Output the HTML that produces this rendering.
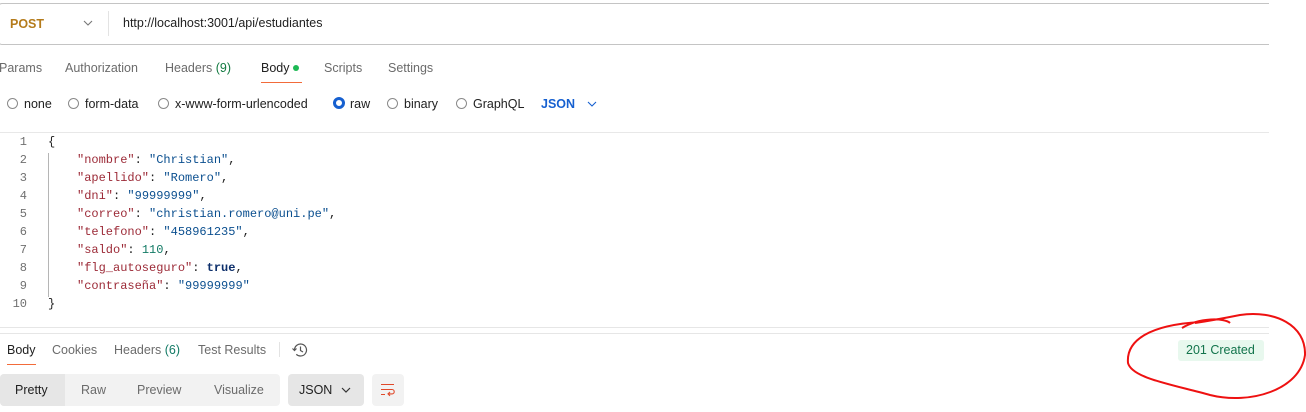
<!DOCTYPE html>
<html><head><meta charset="utf-8"><style>
*{margin:0;padding:0;box-sizing:border-box}
body{width:1306px;height:412px;background:#fff;position:relative;overflow:hidden;font-family:"Liberation Sans",sans-serif;font-size:12.5px;color:#212121}
.a{position:absolute;white-space:nowrap}
.g{color:#6b6b6b}
.rad{position:absolute;width:11px;height:11px;border:1px solid #8a8a8a;border-radius:50%}
.code{font-family:"Liberation Mono",monospace;font-size:12px}
.ln{position:absolute;width:27px;text-align:right;color:#707070;font-family:"Liberation Mono",monospace;font-size:12px}
.k{color:#9c2a37}.s{color:#0b4f8f}.n{color:#127a65}.b{color:#0d2f6b}
</style></head><body>
<div class="a" style="left:-2px;top:3px;width:1271px;height:42px;border:1px solid #c4c4c4;border-right:none;border-radius:4px 0 0 4px"></div>
<div class="a" style="left:10px;top:17px;color:#b47b1b;font-weight:bold;font-size:12.5px">POST</div>
<svg class="a" style="left:83px;top:19px" width="10" height="8"><path d="M1 2l4 4 4-4" fill="none" stroke="#777" stroke-width="1.1"/></svg>
<div class="a" style="left:108px;top:11px;width:1px;height:25px;background:#e3e3e3"></div>
<div class="a" style="left:123px;top:16px;color:#212121;font-size:12.5px">http://localhost:3001/api/estudiantes</div>

<div class="a g" style="left:-1px;top:61px">Params</div>
<div class="a g" style="left:65px;top:61px">Authorization</div>
<div class="a g" style="left:165px;top:61px">Headers <span style="color:#127a40">(9)</span></div>
<div class="a" style="left:261px;top:61px;color:#212121">Body</div>
<div class="a" style="left:293px;top:65px;width:6px;height:6px;border-radius:50%;background:#1db954"></div>
<div class="a" style="left:261px;top:82px;width:41px;height:1px;background:#f26b3a"></div>
<div class="a g" style="left:324px;top:61px">Scripts</div>
<div class="a g" style="left:388px;top:61px">Settings</div>

<div class="rad" style="left:7px;top:98px"></div><div class="a" style="left:24px;top:97px">none</div>
<div class="rad" style="left:68px;top:98px"></div><div class="a" style="left:85px;top:97px">form-data</div>
<div class="rad" style="left:158px;top:98px"></div><div class="a" style="left:175px;top:97px">x-www-form-urlencoded</div>
<div class="a" style="left:333px;top:97px;width:12px;height:12px;border:3.5px solid #1660d0;border-radius:50%"></div><div class="a" style="left:350px;top:97px">raw</div>
<div class="rad" style="left:387px;top:98px"></div><div class="a" style="left:404px;top:97px">binary</div>
<div class="rad" style="left:456px;top:98px"></div><div class="a" style="left:473px;top:97px">GraphQL</div>
<div class="a" style="left:541px;top:97px;color:#1660d0;font-weight:bold">JSON</div>
<svg class="a" style="left:587px;top:100px" width="10" height="8"><path d="M1 2l4 4 4-4" fill="none" stroke="#1660d0" stroke-width="1.1"/></svg>

<div class="a" style="left:0;top:132px;width:1269px;height:1px;background:#e8e8e8"></div>

<div class="a" style="left:48px;top:153px;width:1px;height:144px;background:#b5b5b5"></div>
<div class="ln" style="left:0;top:135px">1</div><div class="a code" style="left:48px;top:135px">{</div>
<div class="ln" style="left:0;top:153px">2</div><div class="a code" style="left:77px;top:153px"><span class="k">"nombre"</span>: <span class="s">"Christian"</span>,</div>
<div class="ln" style="left:0;top:171px">3</div><div class="a code" style="left:77px;top:171px"><span class="k">"apellido"</span>: <span class="s">"Romero"</span>,</div>
<div class="ln" style="left:0;top:189px">4</div><div class="a code" style="left:77px;top:189px"><span class="k">"dni"</span>: <span class="s">"99999999"</span>,</div>
<div class="ln" style="left:0;top:207px">5</div><div class="a code" style="left:77px;top:207px"><span class="k">"correo"</span>: <span class="s">"christian.romero@uni.pe"</span>,</div>
<div class="ln" style="left:0;top:225px">6</div><div class="a code" style="left:77px;top:225px"><span class="k">"telefono"</span>: <span class="s">"458961235"</span>,</div>
<div class="ln" style="left:0;top:243px">7</div><div class="a code" style="left:77px;top:243px"><span class="k">"saldo"</span>: <span class="n">110</span>,</div>
<div class="ln" style="left:0;top:261px">8</div><div class="a code" style="left:77px;top:261px"><span class="k">"flg_autoseguro"</span>: <b class="b">true</b>,</div>
<div class="ln" style="left:0;top:279px">9</div><div class="a code" style="left:77px;top:279px"><span class="k">"contraseña"</span>: <span class="s">"99999999"</span></div>
<div class="ln" style="left:0;top:297px">10</div><div class="a code" style="left:48px;top:297px">}</div>

<div class="a" style="left:0;top:327px;width:1269px;height:1px;background:#e6e6e6"></div>
<div class="a" style="left:0;top:333px;width:1269px;height:1px;background:#e6e6e6"></div>

<div class="a" style="left:7px;top:343px;color:#212121">Body</div>
<div class="a" style="left:7px;top:364px;width:29px;height:1px;background:#f26b3a"></div>
<div class="a g" style="left:52px;top:343px">Cookies</div>
<div class="a g" style="left:114px;top:343px">Headers <span style="color:#127a65">(6)</span></div>
<div class="a g" style="left:198px;top:343px">Test Results</div>
<div class="a" style="left:279px;top:342px;width:1px;height:15px;background:#e3e3e3"></div>
<svg class="a" style="left:291px;top:341px" width="18" height="18" viewBox="0 0 18 18"><path d="M3.5 9a6 6 0 1 1 1.8 4.3" fill="none" stroke="#555" stroke-width="1.2"/><path d="M1.5 7.5l2 2 2-2" fill="none" stroke="#555" stroke-width="1.2"/><path d="M9.5 5.5v4l2.5 1.5" fill="none" stroke="#555" stroke-width="1.2"/></svg>

<div class="a" style="left:0;top:374px;width:280px;height:32px;background:#f2f2f2;border-radius:4px"></div>
<div class="a" style="left:0;top:374px;width:65px;height:32px;background:#e6e6e6;border-radius:4px 0 0 4px"></div>
<div class="a" style="left:15px;top:383px;color:#212121">Pretty</div>
<div class="a g" style="left:81px;top:383px">Raw</div>
<div class="a g" style="left:137px;top:383px">Preview</div>
<div class="a g" style="left:214px;top:383px">Visualize</div>
<div class="a" style="left:288px;top:374px;width:76px;height:32px;background:#e6e6e6;border-radius:4px"></div>
<div class="a" style="left:299px;top:383px;color:#212121">JSON</div>
<svg class="a" style="left:341px;top:386px" width="10" height="8"><path d="M1 2l4 4 4-4" fill="none" stroke="#333" stroke-width="1.2"/></svg>
<div class="a" style="left:372px;top:374px;width:32px;height:32px;background:#f2f2f2;border-radius:4px"></div>
<svg class="a" style="left:380px;top:382px" width="16" height="16" viewBox="0 0 16 16"><path d="M1 2.5h13M1 7.5h11a2.2 2.2 0 0 1 0 4.4H8M10 10l-2 1.9 2 1.9M1 12.5h4" fill="none" stroke="#e0492a" stroke-width="1.1"/></svg>

<div class="a" style="left:1178px;top:340px;width:86px;height:21px;background:#e8f8ee;border-radius:3px"></div>
<div class="a" style="left:1186px;top:343px;color:#13744c">201 Created</div>

<svg class="a" style="left:0;top:0" width="1306" height="412"><path d="M1182 328C1200 317 1225 318 1230 323M1200 322C1150 325 1126 340 1128 363C1132 378 1170 384 1210 395C1250 405 1300 390 1305 355C1306 325 1275 310 1240 315C1225 318 1215 320 1195 323" fill="none" stroke="#ee1111" stroke-width="2"/></svg>
</body></html>
